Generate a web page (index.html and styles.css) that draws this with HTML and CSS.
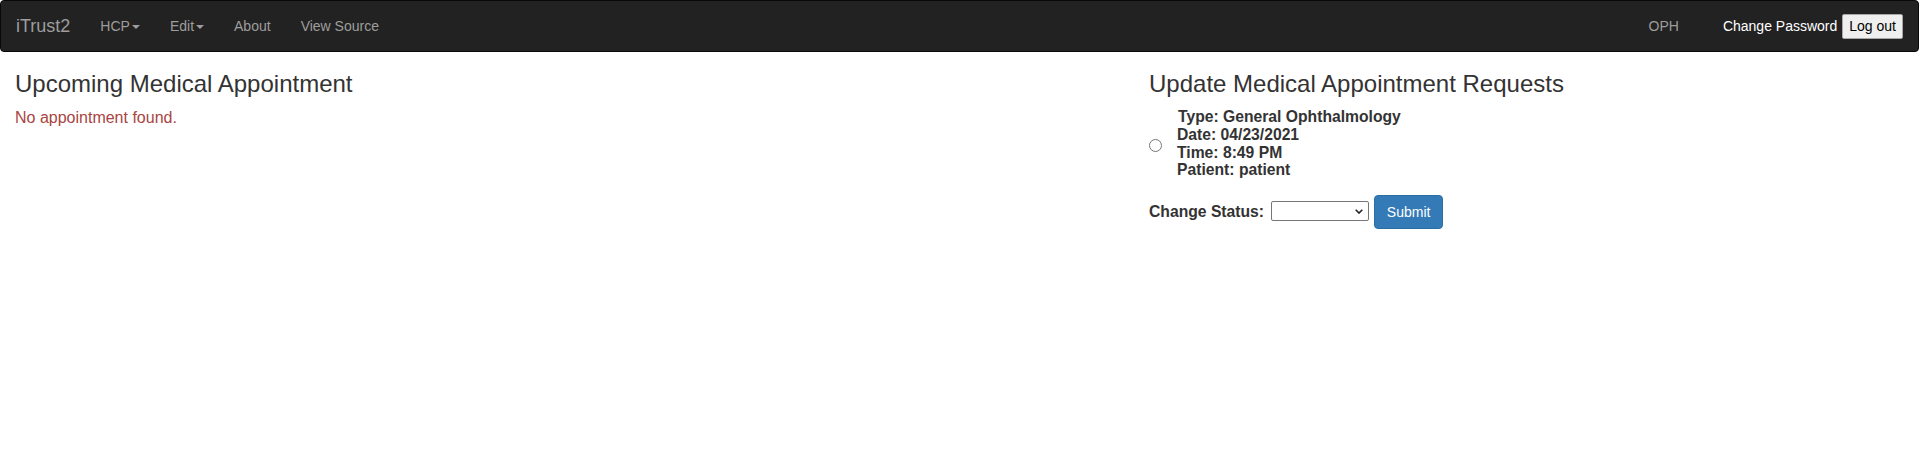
FILE: index.html
```html
<!DOCTYPE html>
<html lang="en">
<head>
<meta charset="utf-8">
<title>iTrust2</title>
<link rel="stylesheet" href="styles.css">
</head>
<body>
<nav class="navbar">
  <a class="brand" href="#">iTrust2</a>
  <ul class="nav">
    <li><a href="#">HCP<span class="caret"></span></a></li>
    <li><a href="#">Edit<span class="caret"></span></a></li>
    <li><a href="#">About</a></li>
    <li><a href="#">View Source</a></li>
  </ul>
  <div class="nav-right">
    <a class="role" href="#">OPH</a>
    <span class="change-pw">Change Password</span>
    <button class="logout" type="button">Log out</button>
  </div>
</nav>
<main class="content">
  <section class="col-left">
    <h3>Upcoming Medical Appointment</h3>
    <p class="text-danger">No appointment found.</p>
  </section>
  <section class="col-right">
    <h3>Update Medical Appointment Requests</h3>
    <div class="request">
      <input class="radio" type="radio" name="req">
      <div class="req-info">
        <div class="first">Type: General Ophthalmology</div>
        <div>Date: 04/23/2021</div>
        <div>Time: 8:49 PM</div>
        <div>Patient: patient</div>
      </div>
    </div>
    <form class="status-form">
      <label class="status-label">Change Status:</label>
      <span class="select-wrap"><select class="status-select"><option></option></select><svg class="chev" width="8" height="5" viewBox="0 0 8 5"><path d="M0.7 0.7 L4 4 L7.3 0.7" fill="none" stroke="#222" stroke-width="1.6"/></svg></span>
      <button class="btn-primary" type="button">Submit</button>
    </form>
  </section>
</main>
</body>
</html>
```
FILE: styles.css
```css
* { box-sizing: border-box; }
html, body { margin: 0; padding: 0; }
body {
  font-family: "Liberation Sans", Arial, sans-serif;
  font-size: 14px;
  line-height: 20px;
  color: #333;
  background: #fff;
}
a { text-decoration: none; }

.navbar {
  display: flex;
  align-items: center;
  width: 1919px;
  min-height: 52px;
  padding: 0 15px;
  background: #222;
  border: 1px solid #080808;
  border-radius: 4px;
}
.brand {
  margin-left: -15px;
  padding: 15px;
  font-size: 18px;
  line-height: 20px;
  color: #9d9d9d;
}
.nav {
  display: flex;
  list-style: none;
  margin: 0;
  padding: 0;
}
.nav a {
  display: block;
  padding: 15px;
  line-height: 20px;
  color: #9d9d9d;
}
.caret {
  display: inline-block;
  width: 0;
  height: 0;
  margin-left: 2px;
  vertical-align: middle;
  border-top: 4px solid;
  border-left: 4px solid transparent;
  border-right: 4px solid transparent;
}
.nav-right {
  margin-left: auto;
  display: flex;
  align-items: center;
}
.role {
  padding: 15px;
  color: #9d9d9d;
}
.change-pw {
  margin-left: 29px;
  color: #fff;
}
.logout {
  margin-left: 5px;
  height: 25px;
  padding: 1px 6px;
  font-family: "Liberation Sans", Arial, sans-serif;
  font-size: 14px;
  color: #000;
  background: #efefef;
  border: 1px solid #a8a8a8;
  border-radius: 2px;
}

.content {
  display: grid;
  grid-template-columns: 1149px 1fr;
}
.col-left { padding-left: 15px; }
h3 {
  margin: 19px 0 11px;
  font-size: 24px;
  font-weight: 500;
  line-height: 1.1;
  color: #333;
}
.text-danger {
  margin: 0;
  font-size: 16px;
  line-height: 20px;
  color: #a94442;
}

.request {
  display: flex;
  align-items: center;
}
.radio {
  width: 13px;
  height: 13px;
  margin: 4px 0 0;
}
.req-info {
  margin-left: 15px;
  font-size: 15.7px;
  line-height: 17.6px;
  font-weight: bold;
  color: #333;
}
.req-info .first { padding-left: 1px; }

.status-form {
  margin-top: 16px;
}
.status-label {
  font-size: 15.7px;
  font-weight: bold;
  color: #333;
  margin-right: 3px;
}
.select-wrap {
  position: relative;
  display: inline-block;
  vertical-align: 1px;
}
.status-select {
  display: block;
  width: 98px;
  height: 20px;
  appearance: none;
  -webkit-appearance: none;
  background: #fff;
  border: 1px solid #767676;
  border-radius: 2px;
  margin: 0;
}
.chev {
  position: absolute;
  right: 6px;
  top: 8px;
}
.btn-primary {
  margin-left: 1px;
  height: 34px;
  padding: 6px 12px;
  font-family: "Liberation Sans", Arial, sans-serif;
  font-size: 14px;
  line-height: 20px;
  color: #fff;
  background: #337ab7;
  border: 1px solid #2e6da4;
  border-radius: 4px;
}
```
